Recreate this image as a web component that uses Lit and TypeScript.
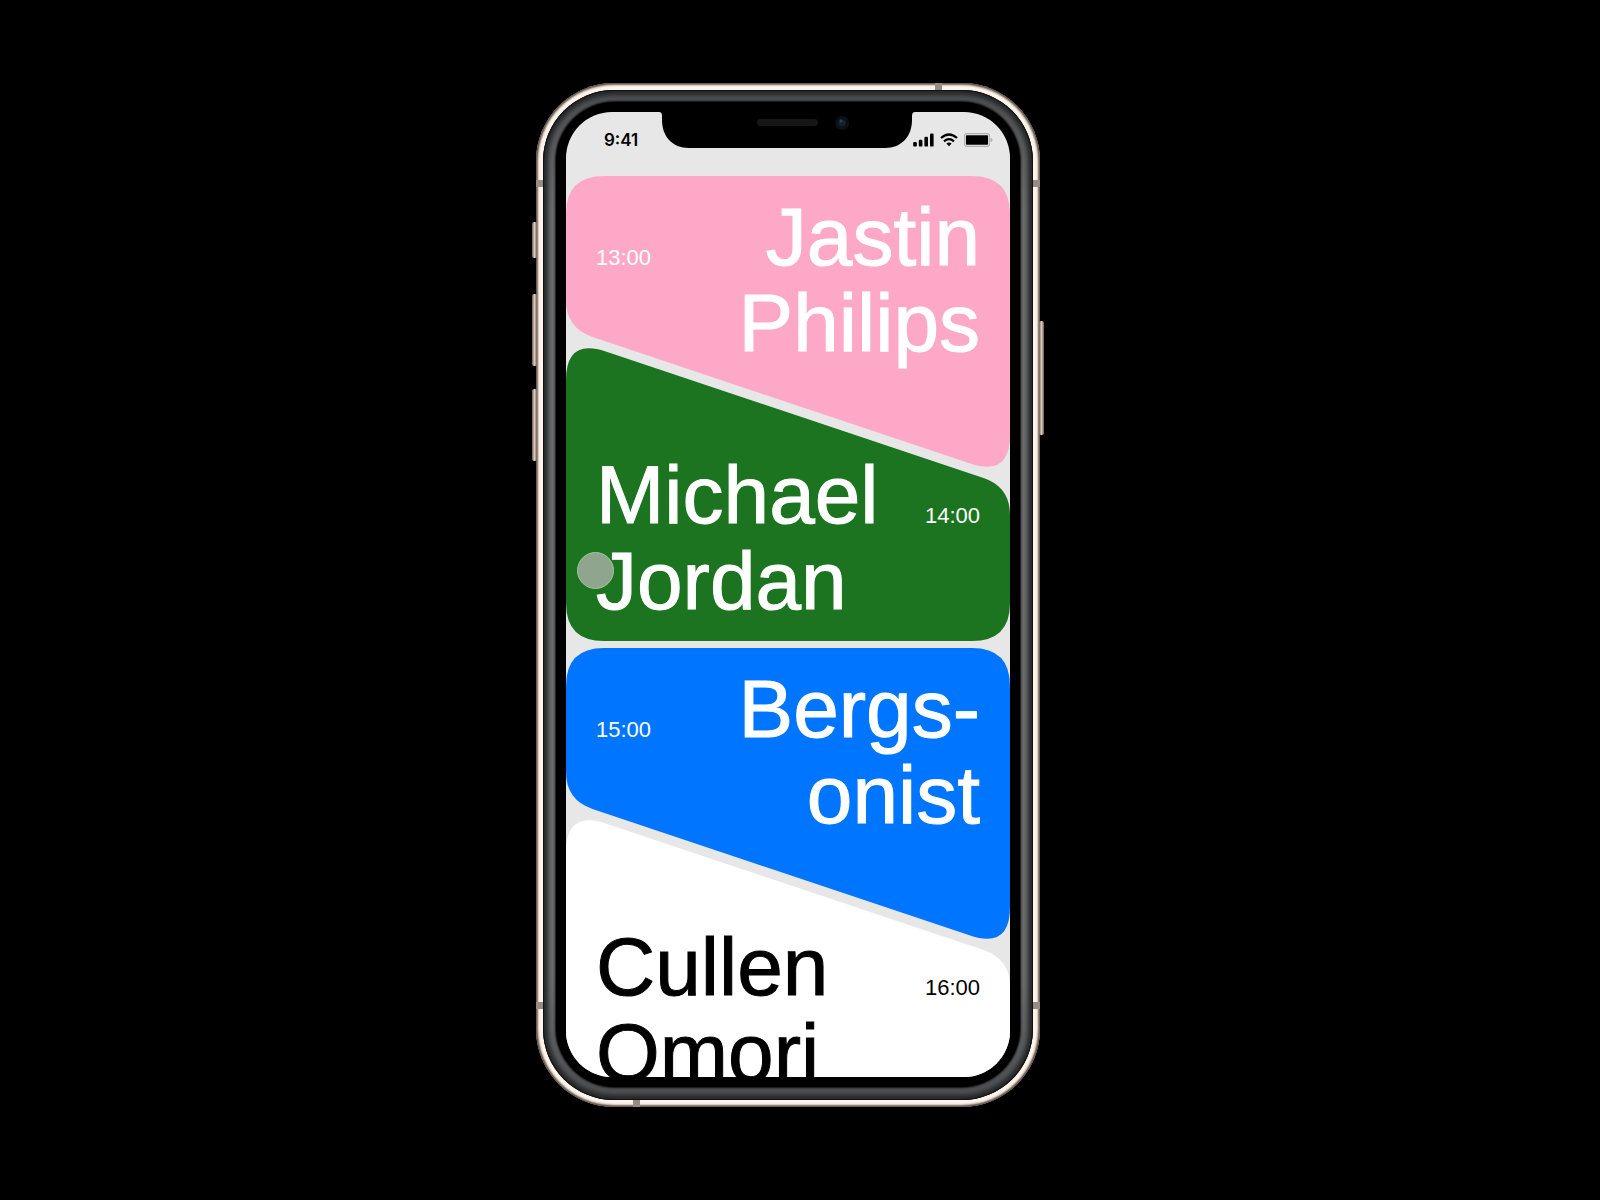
import { LitElement, html, css, svg } from "lit";
import { customElement, property } from "lit/decorators.js";
import { classMap } from "lit/directives/class-map.js";

type Point = { x: number; y: number; r: number };
type Slot = { time: string; lines: string[]; tone: string; side: "upper" | "lower" };

const SLOTS: Slot[] = [
  { time: "13:00", lines: ["Jastin", "Philips"], tone: "pink", side: "upper" },
  { time: "14:00", lines: ["Michael", "Jordan"], tone: "green", side: "lower" },
  { time: "15:00", lines: ["Bergs-", "onist"], tone: "blue", side: "upper" },
  { time: "16:00", lines: ["Cullen", "Omori"], tone: "white", side: "lower" },
];

const UPPER: Point[] = [
  { x: 0, y: 0, r: 38 },
  { x: 444, y: 0, r: 38 },
  { x: 444, y: 301, r: 42 },
  { x: 0, y: 152, r: 28 },
];

const LOWER: Point[] = [
  { x: 0, y: 0, r: 42 },
  { x: 444, y: 149, r: 28 },
  { x: 444, y: 303, r: 38 },
  { x: 0, y: 303, r: 38 },
];

/** Closed path through the points, each corner softened by a quadratic curve. */
function softPolygon(points: Point[]): string {
  const toward = (from: Point, to: Point) => {
    const length = Math.hypot(to.x - from.x, to.y - from.y);
    const k = from.r / length;
    return `${(from.x + (to.x - from.x) * k).toFixed(1)} ${(from.y + (to.y - from.y) * k).toFixed(1)}`;
  };
  const parts = points.map((p, i) => {
    const before = points[(i + points.length - 1) % points.length];
    const after = points[(i + 1) % points.length];
    return `${i ? "L" : "M"}${toward(p, before)}Q${p.x} ${p.y} ${toward(p, after)}`;
  });
  return parts.join("") + "Z";
}

@customElement("slot-card")
class SlotCard extends LitElement {
  @property({ attribute: false }) slotData!: Slot;

  static styles = css`
    :host { display: block; }
    .card {
      position: relative;
      box-sizing: border-box;
      display: flex;
      align-items: first baseline;
      justify-content: space-between;
      color: #fff;
      font-family: "Liberation Sans", Arial, sans-serif;
    }
    .upper { min-height: 301px; padding: 18px 30px 0; }
    .lower { min-height: 303px; padding: 114px 30px 0; flex-direction: row-reverse; }
    .white { color: #000; }
    .shape { position: absolute; inset: 0; width: 100%; height: 100%; }
    .pink .shape { fill: #fea8c7; }
    .green .shape { fill: #1c7421; }
    .blue .shape { fill: #0075ff; }
    .white .shape { fill: #fff; }
    .time { position: relative; font-size: 22px; line-height: 28px; }
    .name {
      position: relative;
      margin: 0;
      font-size: 82px;
      line-height: 86px;
      font-weight: 400;
      -webkit-text-stroke: 1px currentColor;
    }
    .line { display: block; white-space: nowrap; }
    .upper .name { text-align: right; }
  `;

  render() {
    const { time, lines, tone, side } = this.slotData;
    const upper = side === "upper";
    return html`
      <article class=${classMap({ card: true, [tone]: true, [side]: true })}>
        <svg class="shape" viewBox="0 0 444 ${upper ? 301 : 303}" preserveAspectRatio="none" aria-hidden="true">
          <path d=${softPolygon(upper ? UPPER : LOWER)} />
        </svg>
        <time class="time">${time}</time>
        <h2 class="name">${lines.map((line) => html`<span class="line">${line}</span>`)}</h2>
      </article>
    `;
  }
}

@customElement("status-bar")
class StatusBar extends LitElement {
  static styles = css`
    :host { display: block; }
    .bar {
      display: flex;
      align-items: center;
      justify-content: space-between;
      height: 64px;
      box-sizing: border-box;
      padding: 0 17px 8px 38px;
      color: #000;
      font-family: Inter, "Liberation Sans", sans-serif;
    }
    .clock { font-size: 17px; line-height: 20px; font-weight: 600; }
    .icons { display: flex; align-items: center; gap: 6px; }
    .icon { display: block; }
  `;

  render() {
    return html`
      <header class="bar">
        <time class="clock">9:41</time>
        <div class="icons">
          <svg class="icon" width="21" height="14" viewBox="0 0 21 14" aria-hidden="true">
            <rect x="0.2" y="9" width="3.6" height="4.6" rx="1.2" />
            <rect x="5.8" y="6.8" width="3.6" height="6.8" rx="1.2" />
            <rect x="11.4" y="3.8" width="3.6" height="9.8" rx="1.2" />
            <rect x="17" y="0.6" width="3.6" height="13" rx="1.2" />
          </svg>
          <svg class="icon" width="18" height="14" viewBox="0 0 18 14" aria-hidden="true">
            <path d="M1 5Q9-2 17 5" fill="none" stroke="#000" stroke-width="2.3" />
            <path d="M4 8.3Q9 4 14 8.3" fill="none" stroke="#000" stroke-width="2.2" />
            <path d="M6.4 10.4Q9 8.4 11.6 10.4L9 13.2Z" />
          </svg>
          <svg class="icon" width="29" height="14" viewBox="0 0 29 14" aria-hidden="true">
            <rect x="0.7" y="0.7" width="24.6" height="12.6" rx="2" fill="none" stroke="#b0b0b0" stroke-width="1.3" />
            <rect x="2" y="2.2" width="22" height="9.6" rx="0.8" />
            <path d="M26.5 4.8Q28.6 5.4 28.6 7T26.5 9.2Z" fill="#b0b0b0" />
          </svg>
        </div>
      </header>
    `;
  }
}

@customElement("app-root")
class AppRoot extends LitElement {
  static styles = css`
    :host { display: block; min-height: 100vh; background: #000; }
    .stage {
      box-sizing: border-box;
      min-height: 100vh;
      display: grid;
      place-items: center;
      padding: 0 24px 10px 0;
      overflow: hidden;
    }
    .phone {
      position: relative;
      box-sizing: border-box;
      width: min(504px, 100%);
      padding: 7px;
      border-radius: 78px;
      background: #fdf4ec;
      box-shadow: inset 0 0 2px 2px #6f5f55, inset 0 0 0 1px #3d332d;
    }
    .rim {
      padding: 12px 13px 13px;
      border-radius: 71px;
      background: linear-gradient(#4c4d4e, #6c6c6e 12%, #6c6c6e 88%, #4c4d4e);
      box-shadow: inset 0 0 0 1px #111, inset 0 0 4px 5px #242627;
    }
    .glass {
      padding: 10px;
      border-radius: 59px;
      background: #000;
      box-shadow: 0 0 2px 1px #0c0c0d;
    }
    .screen {
      position: relative;
      aspect-ratio: 444 / 965;
      overflow: hidden;
      border-radius: 46px;
      background: #e7e7e7;
    }
    .list { margin: 0; padding: 0; list-style: none; }
    .upper { margin-bottom: -139px; }
    .lower { margin-bottom: 7px; }
    .notch { position: absolute; top: 0; left: 50%; margin-left: -129px; display: block; }
    .touch {
      position: absolute;
      left: 11px;
      top: 440px;
      width: 37px;
      height: 37px;
      box-sizing: border-box;
      border: 1px solid #9fc79d;
      border-radius: 50%;
      background: #8fa58d;
    }
    .key { position: absolute; width: 5px; background: linear-gradient(90deg, #6d5c51, #dccbbd, #6d5c51); border-radius: 2px; }
    .mute { left: -4px; top: 139px; height: 36px; }
    .louder { left: -4px; top: 211px; height: 72px; }
    .quieter { left: -4px; top: 306px; height: 72px; }
    .power { right: -4px; top: 238px; height: 114px; }
    .band { position: absolute; width: 7px; height: 7px; background: #978c85; }
    .band-nw { left: 0; top: 97px; }
    .band-ne { right: 0; top: 97px; }
    .band-sw { left: 0; bottom: 98px; }
    .band-se { right: 0; bottom: 98px; }
    .band-top { right: 98px; top: 0; }
    .band-bottom { left: 97px; bottom: 0; }
  `;

  private notch() {
    return svg`
      <path d="M0 0H256Q253 0 253 4V8C253 24 243 36 226 36H30C13 36 3 24 3 8V4Q3 0 0 0Z" fill="#000" />
      <rect x="98" y="7" width="61" height="7" rx="3.5" fill="#161616" />
      <circle cx="183" cy="11" r="7" fill="#0b1016" />
      <circle cx="183" cy="11" r="3.6" fill="#14222f" />
      <circle cx="182" cy="9" r="1.4" fill="#2d3f50" />
    `;
  }

  render() {
    return html`
      <main class="stage">
        <div class="phone">
          <i class="key mute"></i><i class="key louder"></i><i class="key quieter"></i><i class="key power"></i>
          <i class="band band-nw"></i><i class="band band-ne"></i><i class="band band-sw"></i>
          <i class="band band-se"></i><i class="band band-top"></i><i class="band band-bottom"></i>
          <div class="rim">
            <div class="glass">
              <div class="screen">
                <status-bar></status-bar>
                <ul class="list">
                  ${SLOTS.map((s) => html`<li class=${s.side}><slot-card .slotData=${s}></slot-card></li>`)}
                </ul>
                <svg class="notch" width="256" height="36" viewBox="0 0 256 36" aria-hidden="true">${this.notch()}</svg>
                <span class="touch"></span>
              </div>
            </div>
          </div>
        </div>
      </main>
    `;
  }
}
